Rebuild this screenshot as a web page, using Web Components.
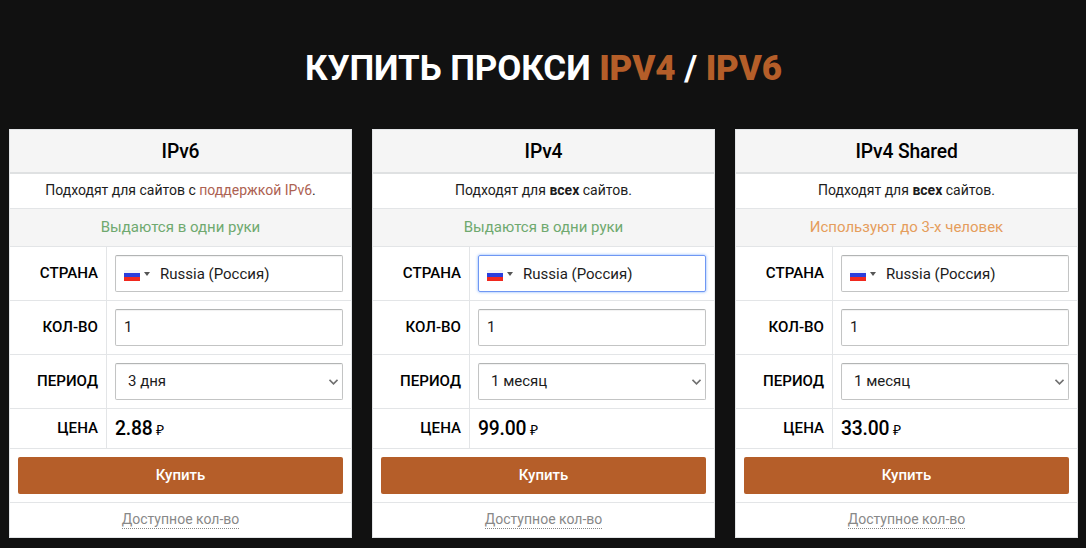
<!DOCTYPE html>
<html lang="ru">
<head>
<meta charset="utf-8">
<title>Купить прокси</title>
<style>
    body
    {
        margin      : 0;
        background  : #111111;
        color       : #000000;
        font-family : Roboto, "Open Sans", sans-serif;
        overflow    : hidden;
    }
</style>
</head>
<body>
<proxy-page>
    <page-title>Купить прокси <b>IPv4</b> / <b>IPv6</b></page-title>
    <proxy-card name="IPv6" status="Выдаются в одни руки" period="3 дня" price="2.88">Подходят для сайтов с <a>поддержкой IPv6</a>.</proxy-card>
    <proxy-card name="IPv4" status="Выдаются в одни руки" period="1 месяц" price="99.00" active>Подходят для <b>всех</b> сайтов.</proxy-card>
    <proxy-card name="IPv4 Shared" status="Используют до 3-х человек" period="1 месяц" price="33.00" shared>Подходят для <b>всех</b> сайтов.</proxy-card>
</proxy-page>

<script>
class ProxyPage extends HTMLElement
{
    constructor()
    {
        super();
        this.shadowDOM = this.attachShadow({mode:"open"});
        this.shadowDOM.innerHTML =
        `
        <style>
            :host
            {
                display               : grid;
                grid-template-columns : repeat(3, 343px);
                grid-template-rows    : 129px auto;
                column-gap            : 20px;
                padding-left          : 9px;
            }

            ::slotted(page-title)
            {
                grid-column : 1 / -1;
            }
        </style>
        <slot></slot>`;
    }
}

class PageTitle extends HTMLElement
{
    constructor()
    {
        super();
        this.shadowDOM = this.attachShadow({mode:"open"});
        this.shadowDOM.innerHTML =
        `
        <style>
            :host
            {
                display        : block;
                padding-top    : 47px;
                color          : #ffffff;
                font-size      : 35px;
                font-weight    : 700;
                line-height    : 44px;
                letter-spacing : -.1px;
                text-align     : center;
                text-transform : uppercase;
            }

            ::slotted(b)
            {
                color : #b55e29;
            }
        </style>
        <slot></slot>`;
    }
}

class FieldRow extends HTMLElement
{
    constructor()
    {
        super();
        this.shadowDOM = this.attachShadow({mode:"open"});
    }

    connectedCallback()
    {
        this.shadowDOM.innerHTML =
        `
        <style>
            :host
            {
                display       : flex;
                box-sizing    : border-box;
                height        : 54px;
                border-bottom : 1px solid #e3e5e7;
            }

            .label
            {
                box-sizing   : border-box;
                width        : 97px;
                padding      : 8px 8px 0 0;
                border-right : 1px solid #e3e5e7;
                font-size    : 15.1px;
                font-weight  : 500;
                line-height  : 36px;
                text-align   : right;
            }

            .value
            {
                flex    : 1;
                padding : 8px;
            }

            :host([low])
            {
                height : 40px;
            }

            :host([low]) .label, :host([low]) .value
            {
                padding-top    : 0;
                padding-bottom : 0;
            }

            :host([low]) .label
            {
                line-height : 38px;
            }
        </style>
        <div class="label">${this.getAttribute("label")}</div>
        <div class="value"><slot></slot></div>`;
    }
}

class FieldBox extends HTMLElement
{
    constructor()
    {
        super();
        this.shadowDOM = this.attachShadow({mode:"open"});
        this.shadowDOM.innerHTML =
        `
        <style>
            :host
            {
                display       : flex;
                align-items   : center;
                box-sizing    : border-box;
                height        : 37px;
                padding       : 0 4px 0 8px;
                border        : 1px solid #c3c4c4;
                border-top-color : #b2b4b4;
                border-radius : 2px;
                box-shadow    : inset 0 1px 1px rgba(0,0,0,.06);
                font-size     : 15px;
                font-weight   : 400;
                color         : #1c1c1c;
            }

            :host([select])
            {
                padding-left : 12px;
            }

            :host([active])
            {
                border-color : #6f97f3;
                box-shadow   : 0 0 3px rgba(77,144,254,.75);
            }

            svg
            {
                flex : none;
            }

            .flag
            {
                margin : 3px 4px 0 0;
            }

            .caret
            {
                margin-right : 10px;
            }

            .arrow
            {
                margin-left : auto;
            }

            slot
            {
                display        : block;
                padding-bottom : 1px;
            }

            :host([flag]) slot
            {
                padding : 1px 0 0;
            }

            :host(:not([flag])) .flag, :host(:not([flag])) .caret, :host(:not([select])) .arrow
            {
                display : none;
            }
        </style>
        <svg class="flag" width="16" height="11" viewBox="0 0 16 11">
            <path fill="#f2f2f6" d="M0 0h16v4H0z"/>
            <path fill="#2a3ddc" d="M0 3h16V7H0z"/>
            <path fill="#f0281e" d="M0 7h16V11H0z"/>
        </svg>
        <svg class="caret" width="6" height="4" viewBox="0 0 6 4"><path fill="#555555" d="M0 0h6L3 4z"/></svg>
        <slot></slot>
        <svg class="arrow" width="9" height="6" viewBox="0 0 9 6"><path fill="none" stroke="#707070" stroke-width="1.6" d="M.5 .8L4.5 4.8 8.5 .8"/></svg>`;
    }
}

class ProxyCard extends HTMLElement
{
    constructor()
    {
        super();
        this.shadowDOM = this.attachShadow({mode:"open"});
    }

    connectedCallback()
    {
        this.render();
    }

    render()
    {
        const active = this.hasAttribute("active") ? "active" : "";

        this.shadowDOM.innerHTML =
        `
        <style>
            :host
            {
                display    : block;
                box-sizing : border-box;
                height     : 409px;
                border     : 1px solid #e3e5e7;
                background : #ffffff;
                text-align : center;
            }

            .name, .info, .status, .buy, .stock
            {
                box-sizing    : border-box;
                border-bottom : 1px solid #e3e5e7;
            }

            .name
            {
                height         : 44px;
                border-bottom  : 2px solid #dfe1e2;
                background     : #f5f5f5;
                font-size      : 19.3px;
                font-weight    : 500;
                line-height    : 43px;
                letter-spacing : -.15px;
            }

            .info
            {
                height         : 35px;
                color          : #1c1c1c;
                font-size      : 14px;
                line-height    : 33px;
            }

            .status
            {
                height         : 38px;
                background     : #f5f5f5;
                color          : #6fa96f;
                font-size      : 15px;
                line-height    : 36px;
            }

            :host([shared]) .status
            {
                color : #e59d5c;
            }

            .price
            {
                font-size      : 19.3px;
                font-weight    : 500;
                line-height    : 39px;
                letter-spacing : -.2px;
                text-align     : left;
            }

            .price small
            {
                margin-left : -1px;
                font-family : "Liberation Sans", sans-serif;
                font-size   : 14px;
                font-weight : 400;
            }

            .buy
            {
                height  : 54px;
                padding : 8px;
            }

            .button
            {
                height        : 37px;
                border-radius : 2px;
                background    : #b55e29;
                color         : #ffffff;
                font-size     : 15px;
                font-weight   : 500;
                line-height   : 36px;
            }

            .stock
            {
                height         : 34px;
                border-bottom  : 0;
                color          : #888888;
                font-size      : 14px;
                line-height    : 17px;
                padding-top    : 8px;
            }

            .stock span
            {
                padding-bottom : 1px;
                border-bottom  : 1px dotted #888888;
            }

            ::slotted(a)
            {
                color : #ad6252;
            }

            ::slotted(b)
            {
                font-weight : 700;
            }
        </style>

        <div class="name">${this.getAttribute("name")}</div>
        <div class="info"><slot></slot></div>
        <div class="status">${this.getAttribute("status")}</div>
        <field-row label="СТРАНА"><field-box flag ${active}>Russia (Россия)</field-box></field-row>
        <field-row label="КОЛ-ВО"><field-box>1</field-box></field-row>
        <field-row label="ПЕРИОД"><field-box select>${this.getAttribute("period")}</field-box></field-row>
        <field-row label="ЦЕНА" low><div class="price">${this.getAttribute("price")} <small>₽</small></div></field-row>
        <div class="buy"><div class="button">Купить</div></div>
        <div class="stock"><span>Доступное кол-во</span></div>`;
    }
}

customElements.define("proxy-page",ProxyPage);
customElements.define("page-title",PageTitle);
customElements.define("field-row",FieldRow);
customElements.define("field-box",FieldBox);
customElements.define("proxy-card",ProxyCard);
</script>
</body>
</html>
